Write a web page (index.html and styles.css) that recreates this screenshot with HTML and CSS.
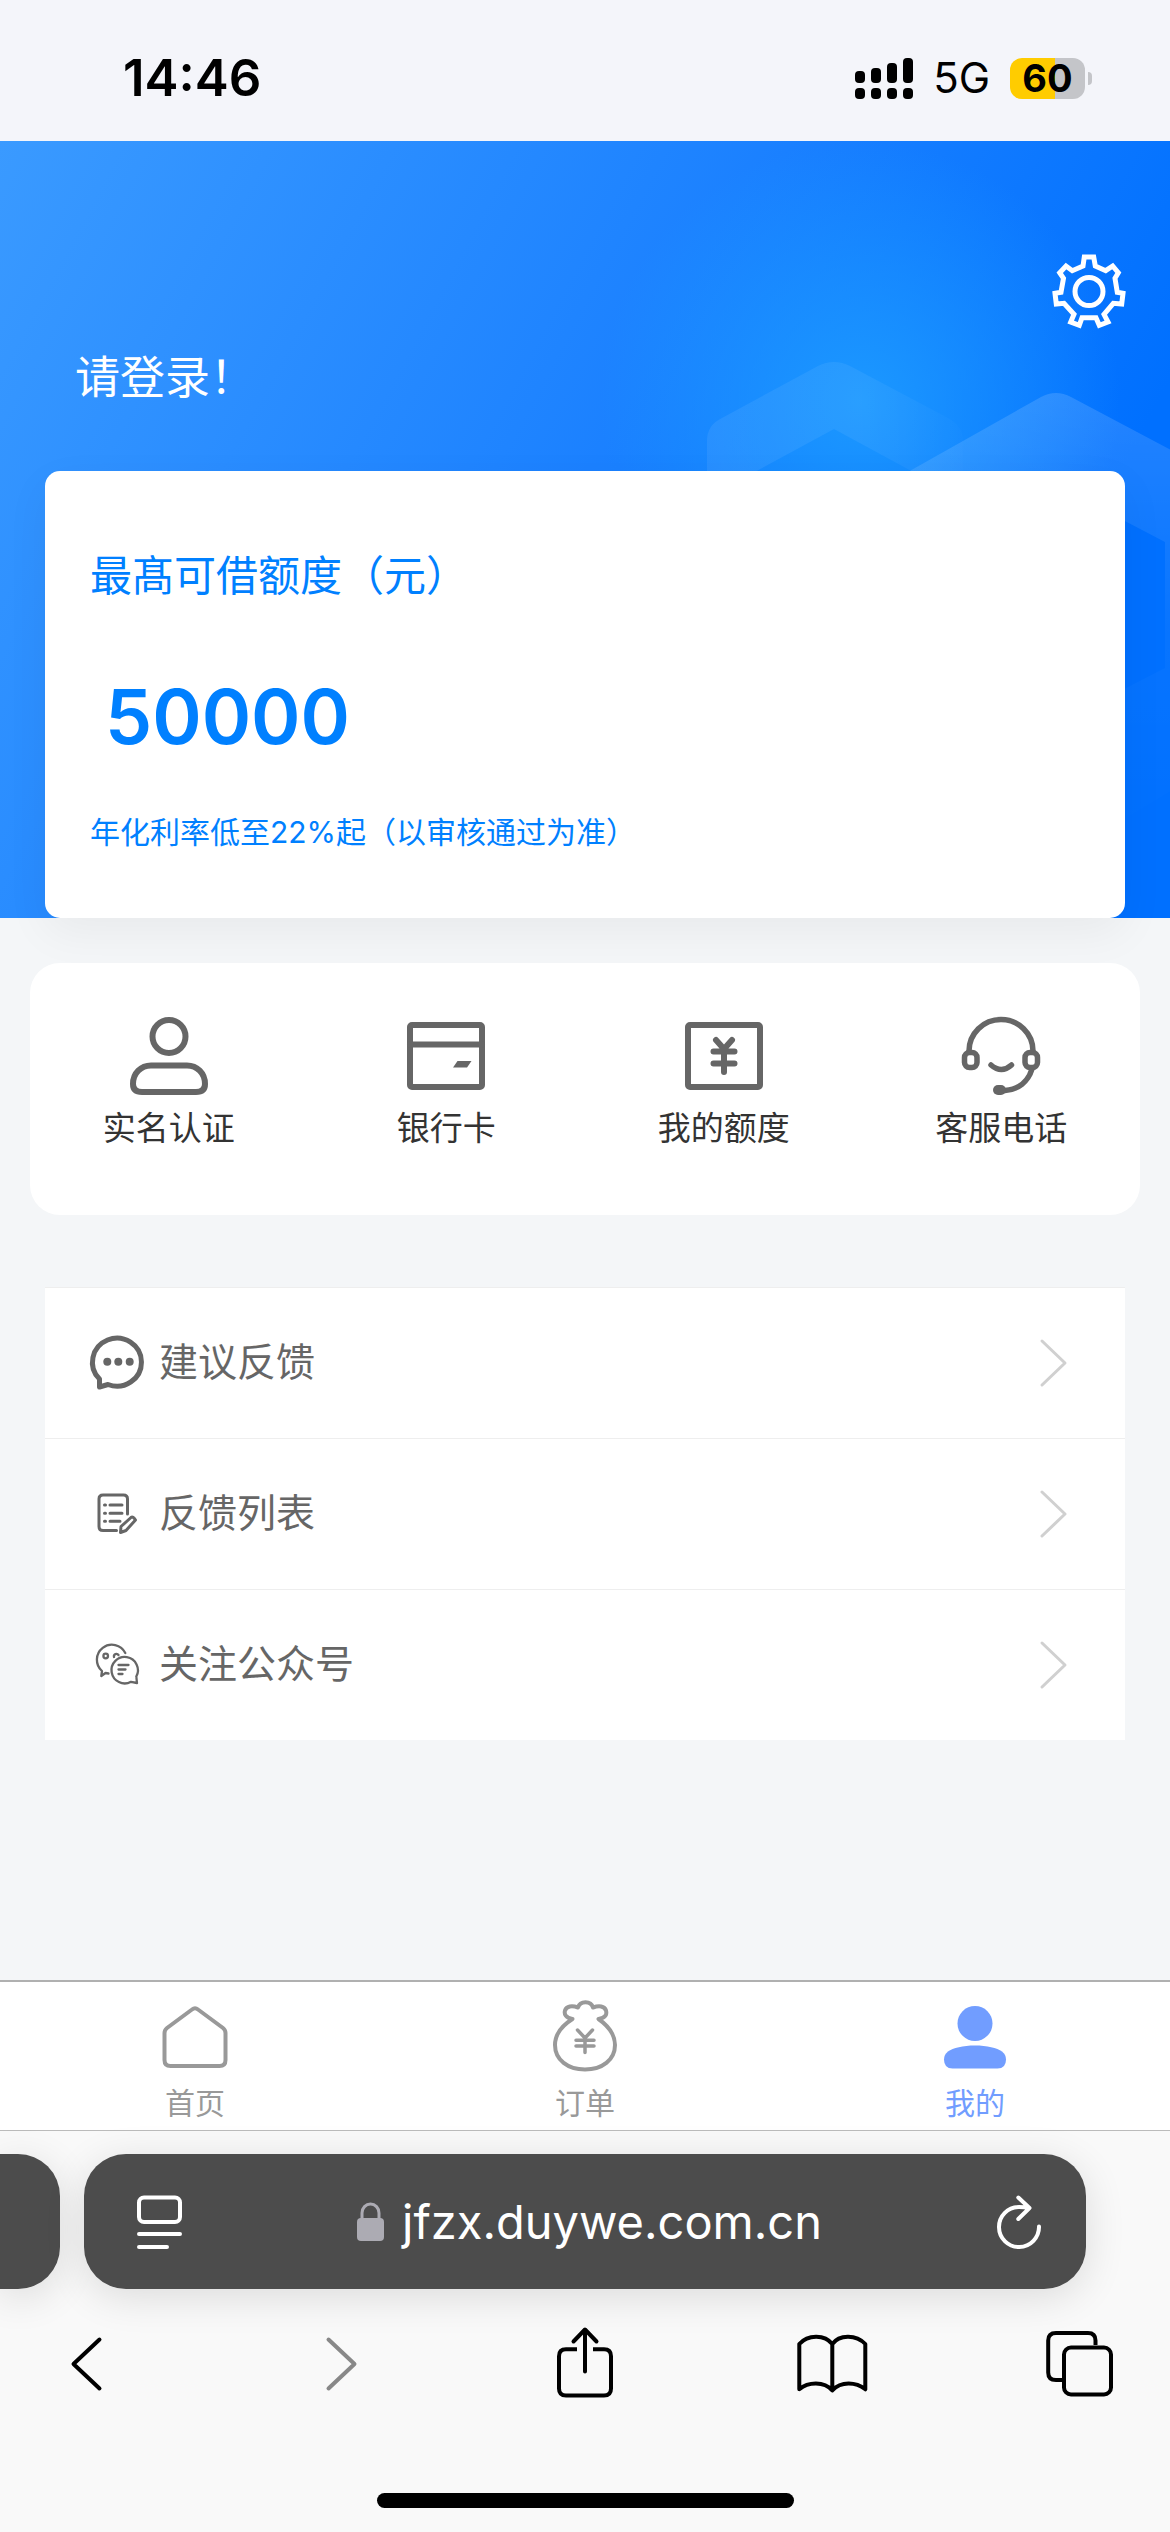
FILE: index.html
```html
<!DOCTYPE html>
<html lang="zh-CN">
<head>
<meta charset="utf-8">
<meta name="viewport" content="width=device-width, initial-scale=1">
<title>我的</title>
<link rel="stylesheet" href="styles.css">
</head>
<body>
<div class="status-bar">
  <time class="clock">14:46</time>
  <div class="status-right">
    <svg class="signal" viewBox="0 0 58 41" aria-hidden="true">
      <rect x="0" y="13" width="10" height="12" rx="4"/><rect x="16" y="10" width="10" height="15" rx="4"/>
      <rect x="32" y="5" width="10" height="20" rx="4"/><rect x="48" y="0" width="10" height="25" rx="4"/>
      <rect x="0" y="30" width="10" height="11" rx="4"/><rect x="16" y="30" width="10" height="11" rx="4"/>
      <rect x="32" y="30" width="10" height="11" rx="4"/><rect x="48" y="30" width="10" height="11" rx="4"/>
    </svg>
    <span class="network">5G</span>
    <div class="battery-wrap">
      <span class="battery">60</span>
      <span class="battery-nub"></span>
    </div>
  </div>
</div>

<main class="page">
  <header class="hero">
    <svg class="hero-art" viewBox="0 0 1170 777" preserveAspectRatio="xMaxYMin slice" aria-hidden="true">
      <defs>
        <linearGradient id="hexA" x1="0" y1="0" x2="1" y2="0">
          <stop offset="0" stop-color="#fff" stop-opacity=".07"/><stop offset=".6" stop-color="#fff" stop-opacity=".06"/><stop offset="1" stop-color="#fff" stop-opacity=".01"/>
        </linearGradient>
        <linearGradient id="hexB" x1="0" y1="0" x2="0" y2="1">
          <stop offset="0" stop-color="#fff" stop-opacity=".14"/><stop offset=".5" stop-color="#fff" stop-opacity=".03"/><stop offset="1" stop-color="#fff" stop-opacity="0"/>
        </linearGradient>
      </defs>
      <path fill="url(#hexA)" fill-rule="evenodd" d="M707 416V300Q707 284 722 277L818 225Q834 217 850 225L948 277Q963 285 963 300V416ZM834 288L740 339V416H928V339Z"/>
      <path fill="url(#hexB)" fill-rule="evenodd" d="M860 680V358L1041 256Q1056 248 1071 256L1252 352V600L1056 720ZM1056 344L947 401V527L1056 583L1165 527V401Z"/>
    </svg>
    <div class="hero-top">
      <button class="icon-button" aria-label="设置">
        <svg class="gear" viewBox="0 0 72 72">
          <path d="M31.3 2H40.7L42.3 11L52.7 15.7L59.7 11L65.3 17.7L62 23.3L64.3 37.3L70 38.3L68.7 49L60.3 48.3L51 59.3L55 67L46.3 70.3L43 62.7H29L26.3 70.3L17.7 67L21 59.3L11 48.3L3.3 49L2 38.3L8 37.3L10.5 23.3L6.7 17.7L13 11L19.3 15.7L30 11Z"/>
          <circle cx="36" cy="36.5" r="14"/>
        </svg>
      </button>
    </div>
    <a class="greeting" href="#login">请登录！</a>
    <section class="quota-card">
      <h1 class="quota-title">最髙可借额度（元）</h1>
      <p class="quota-amount">50000</p>
      <p class="quota-note">年化利率低至22%起（以审核通过为准）</p>
    </section>
  </header>

  <nav class="shortcuts" aria-label="快捷入口">
    <a class="shortcut" href="#verify">
      <svg class="shortcut-icon" viewBox="0 0 78 78" stroke-width="6">
        <circle cx="39" cy="19.5" r="16.5"/>
        <path d="M12 75Q3 75 3 67C3 56 11 48.5 21 48.5H57C67 48.5 75 56 75 67Q75 75 66 75Z"/>
      </svg>
      <span>实名认证</span>
    </a>
    <a class="shortcut" href="#bank">
      <svg class="shortcut-icon" viewBox="0 0 78 78" stroke-width="6">
        <rect x="3" y="8" width="72" height="62" rx="2"/><path d="M3 27.5H75"/>
        <path class="solid" d="M46 50.5L50.5 44H64.500L60 50.500Z"/>
      </svg>
      <span>银行卡</span>
    </a>
    <a class="shortcut" href="#quota">
      <svg class="shortcut-icon" viewBox="0 0 78 78" stroke-width="6">
        <rect x="3" y="8" width="72" height="62" rx="2"/>
        <path d="M31 23L39 32L47 23M39 32V55M28.500 34.500H49.500M28.500 46.500H49.500"/>
      </svg>
      <span>我的额度</span>
    </a>
    <a class="shortcut" href="#service">
      <svg class="shortcut-icon" viewBox="0 0 78 78" stroke-width="5.500">
        <path d="M7 34A32 31.500 0 0 1 71 34M70 52C66 65 56 72.500 43 73.500M29 48Q39.500 57 49.500 48"/>
        <rect x="2.500" y="35.500" width="12.500" height="15" rx="5"/><rect x="63" y="35.500" width="12.500" height="15" rx="5"/>
        <rect class="solid" x="31" y="68" width="13" height="10" rx="5"/>
      </svg>
      <span>客服电话</span>
    </a>
  </nav>

  <ul class="menu">
    <li><a class="menu-item" href="#feedback">
      <svg class="menu-icon" viewBox="0 0 54 54" stroke-width="5">
        <path d="M9.500 43A24.500 24 0 1 1 18 48.500L9.500 51Z"/>
        <g class="solid"><circle cx="17.300" cy="25.700" r="4"/><circle cx="28.300" cy="25.700" r="4"/><circle cx="39.700" cy="25.700" r="4"/></g>
      </svg>
      <span class="menu-label">建议反馈</span>
      <svg class="chevron" viewBox="0 0 27 48"><path d="M2 2L25 24L2 46"/></svg>
    </a></li>
    <li><a class="menu-item" href="#feedback-list">
      <svg class="menu-icon" viewBox="0 0 54 54" stroke-width="3">
        <path d="M26.500 43.500H13Q9 43.500 9 39.500V12Q9 8 13 8H33.500Q37.500 8 37.500 12V27M20 18H32M20 26.300H32M20 34.300H30M14.500 18H15.500M14.500 26.300H15.500M14.500 34.300H15.500"/>
        <path d="M30.500 45.500L31 39.500L41 30.500Q43 29 45.500 33L36 43.500Z"/>
      </svg>
      <span class="menu-label">反馈列表</span>
      <svg class="chevron" viewBox="0 0 27 48"><path d="M2 2L25 24L2 46"/></svg>
    </a></li>
    <li><a class="menu-item" href="#follow">
      <svg class="menu-icon" viewBox="0 0 54 54" stroke-width="2.300">
        <path d="M35.300 15A15 15 0 1 0 12 33L11.300 38L15.500 35L18.500 35.500M24 19A2.500 2.500 0 0 1 28.500 17"/>
        <circle cx="15.700" cy="18" r="2.300"/>
        <path d="M46.300 38.500A13.200 13.200 0 1 0 41 43.800L47 45L46.300 38.500M28.500 27H38.500M28.500 31.500H35.500M28.500 36H32.500"/>
      </svg>
      <span class="menu-label">关注公众号</span>
      <svg class="chevron" viewBox="0 0 27 48"><path d="M2 2L25 24L2 46"/></svg>
    </a></li>
  </ul>
</main>

<nav class="tab-bar" aria-label="主导航">
  <a class="tab" href="#home">
    <svg class="tab-icon" viewBox="0 0 72 72"><path d="M33 9.500Q36 7 39 9.500L64 28Q66.500 30 66.500 33V60Q66.500 66 60.500 66H11.500Q5.500 66 5.500 60V33Q5.500 30 8 28Z"/></svg>
    <span>首页</span>
  </a>
  <a class="tab" href="#orders">
    <svg class="tab-icon" viewBox="0 0 72 72">
      <path d="M23.500 19C14 25 6 33 6 45C6 60 19 69.500 36 69.500S66 60 66 45C66 33 58 25 49.500 19C57 18 58 14 57 10.500C55.500 6 50 5.500 44 7.500C42 .5 31 .5 29 7.500C23 5.500 17.500 6 16 10.500C15 14 16.500 18 23.500 19Z"/>
      <path d="M28.500 30L36 38L43.500 30M36 38V52.500M27 40.300H45M27 46H45" stroke-width="3.500"/>
    </svg>
    <span>订单</span>
  </a>
  <a class="tab tab-active" href="#mine" aria-current="page">
    <svg class="tab-icon" viewBox="0 0 72 72"><circle cx="36" cy="23.500" r="17.500"/><path d="M36 45.500C48 45.500 58 48 63 51.500Q67 54.500 67 59.500Q67 68.500 58.500 68.500H13.500Q5 68.500 5 59.500Q5 54.500 9 51.500C14 48 24 45.500 36 45.500Z"/></svg>
    <span>我的</span>
  </a>
</nav>

<footer class="browser">
  <div class="address-row">
    <div class="address-previous"></div>
    <div class="address">
      <button class="icon-button" aria-label="页面菜单">
        <svg class="address-icon" viewBox="0 0 45 54"><rect x="2" y="2.500" width="41" height="24.500" rx="5"/><path d="M2 39H43M2 52H30"/></svg>
      </button>
      <button class="address-url">
        <svg class="lock" viewBox="0 0 27 39" aria-hidden="true"><rect x="0" y="16" width="27" height="23" rx="4"/><path d="M5 18V11A8.500 9 0 0 1 22 11V18"/></svg>
        <span>jfzx.duywe.com.cn</span>
      </button>
      <button class="icon-button" aria-label="刷新">
        <svg class="address-icon" viewBox="0 0 45 54"><path d="M42 31.500A20 20 0 1 1 22 12Q27 12 32 13M21.300 2.500L32.500 13L21.300 24"/></svg>
      </button>
    </div>
  </div>
  <div class="toolbar">
    <button class="icon-button" aria-label="后退"><svg class="tool-icon" viewBox="0 0 72 72"><path d="M48.500 12.500L22.500 37L48.500 61.500"/></svg></button>
    <button class="icon-button tool-disabled" aria-label="前进"><svg class="tool-icon" viewBox="0 0 72 72"><path d="M28.500 12.500L54.500 37L28.500 61.500"/></svg></button>
    <button class="icon-button" aria-label="分享"><svg class="tool-icon" viewBox="0 0 72 72"><path d="M28 22.300H17Q10 22.300 10 29.300V61.500Q10 68.500 17 68.500H55Q62 68.500 62 61.500V29.300Q62 22.300 55 22.300H44" stroke-linecap="butt"/><path d="M36 3V44.500M24.500 14.500L36 2.500L47.500 14.500"/></svg></button>
    <button class="icon-button" aria-label="书签"><svg class="tool-icon" viewBox="0 0 72 72"><path d="M34.300 17C27 7.500 10 7 1.300 17V62.300C10 55 26 54 34.300 63.500C43 54 58 55 67.300 62.300V17C58 7 41 7.500 34.300 17V63"/></svg></button>
    <button class="icon-button" aria-label="标签页"><svg class="tool-icon" viewBox="0 0 72 72"><rect x="17" y="20.500" width="47" height="47" rx="7"/><path d="M15 53H9Q1.200 53 1.200 45.500V13.500Q1.200 6 9 6H41Q48.500 6 48.500 13.500V18" stroke-linecap="butt"/></svg></button>
  </div>
  <div class="home-indicator"></div>
</footer>
</body>
</html>
```
FILE: styles.css
```css
* {
  box-sizing: border-box;
}

body {
  margin: 0;
  min-height: 100vh;
  display: flex;
  flex-direction: column;
  background: #f4f6f8;
  color: #333;
  font-family: Inter, "Noto Sans CJK SC", sans-serif;
  font-size: 30px;
}

h1,
p,
ul {
  margin: 0;
  padding: 0;
}

ul {
  list-style: none;
}

a {
  color: inherit;
  text-decoration: none;
}

button {
  margin: 0;
  padding: 0;
  border: 0;
  background: none;
  color: inherit;
  font: inherit;
}

svg {
  display: block;
  fill: none;
  stroke: currentColor;
  stroke-linecap: round;
  stroke-linejoin: round;
  overflow: visible;
}

.solid {
  fill: currentColor;
  stroke: none;
}

/* Status bar */
.status-bar {
  display: flex;
  align-items: center;
  justify-content: space-between;
  padding: 48px 78px 33px 123px;
  background: #f4f5fa;
  color: #000;
  line-height: 60px;
}

.clock {
  font-size: 51px;
  font-weight: 600;
}

.status-right {
  display: flex;
  align-items: center;
  gap: 20px;
}

.signal {
  width: 58px;
  height: 41px;
  fill: #000;
  stroke: none;
}

.network {
  font-size: 42px;
}

.battery-wrap {
  display: flex;
  align-items: center;
  gap: 3px;
}

.battery {
  width: 75px;
  border-radius: 12px;
  background: linear-gradient(to right, #fc0 60%, #c4c5c9 60%);
  font-size: 38px;
  font-weight: 700;
  line-height: 41px;
  text-align: center;
}

.battery-nub {
  width: 4px;
  height: 13px;
  border-radius: 0 4px 4px 0;
  background: #c4c5c9;
}

/* Blue header */
.page {
  flex: 1;
}

.hero {
  position: relative;
  display: flex;
  flex-direction: column;
  padding: 114px 45px 0;
  background:
    radial-gradient(circle at 860px 260px, rgba(28, 154, 255, .95), rgba(28, 154, 255, 0) 260px),
    linear-gradient(118deg, #3a9aff 0%, #1a80ff 50%, #0070ff 82%, #0070ff 100%);
  color: #fff;
}

.hero-art {
  position: absolute;
  inset: 0;
  width: 100%;
  height: 100%;
  overflow: hidden;
  stroke: none;
}

.hero-top {
  position: relative;
  display: flex;
  justify-content: flex-end;
}

.gear {
  width: 72px;
  height: 72px;
  stroke-width: 5;
  stroke-linejoin: miter;
}

.greeting {
  position: relative;
  align-self: flex-start;
  margin: 21px 0 63px;
  padding-left: 30px;
  font-size: 45px;
  line-height: 60px;
}

.quota-card {
  position: relative;
  padding: 75px 45px 63px;
  border-radius: 15px;
  background: #fff;
  box-shadow: 0 15px 45px rgba(0, 0, 0, .05);
  color: #0080ff;
}

.quota-title {
  font-size: 42px;
  font-weight: 400;
  line-height: 60px;
}

.quota-amount {
  margin: 53px 0 35px;
  padding-left: 15px;
  font-size: 75px;
  font-weight: 600;
  line-height: 116px;
}

.quota-note {
  line-height: 45px;
}

/* Shortcut card */
.shortcuts {
  position: relative;
  display: grid;
  grid-template-columns: repeat(4, 1fr);
  margin: 45px 30px 72px;
  padding: 54px 0 63px;
  border-radius: 30px;
  background: #fff;
}

.shortcut {
  display: flex;
  flex-direction: column;
  align-items: center;
  gap: 9px;
  font-size: 33px;
  line-height: 48px;
}

.shortcut-icon {
  width: 78px;
  height: 78px;
  color: #666;
}

/* Menu list */
.menu {
  margin: 0 45px 45px;
  background: #fff;
  color: #666;
}

.menu-item {
  display: flex;
  align-items: center;
  gap: 15px;
  min-height: 151px;
  padding: 0 58px 0 45px;
  border-top: 1px solid #eee;
}

.menu-icon {
  width: 54px;
  height: 54px;
}

.menu-label {
  flex: 1;
  padding-bottom: 3px;
  font-size: 39px;
  line-height: 54px;
}

.chevron {
  width: 27px;
  height: 48px;
  color: #d0d0d0;
  stroke-width: 3;
}

/* App tab bar */
.tab-bar {
  display: grid;
  grid-template-columns: repeat(3, 1fr);
  padding: 18px 0 4px;
  border-top: 2px solid #b0b0b0;
  background: #fff;
  color: #999;
}

.tab {
  display: flex;
  flex-direction: column;
  align-items: center;
  gap: 8px;
  line-height: 46px;
}

.tab-icon {
  width: 72px;
  height: 72px;
  stroke-width: 4;
}

.tab-active {
  color: #719dff;
}

.tab-active .tab-icon {
  fill: currentColor;
  stroke: none;
}

/* Browser controls */
.browser {
  border-top: 1px solid #bbb;
  padding: 23px 0 24px;
  background: #f9f9f9;
  color: #000;
}

.address-row {
  display: flex;
  gap: 24px;
  padding-right: 84px;
}

.address-previous,
.address {
  background: #4c4c4c;
  box-shadow: 0 8px 40px rgba(0, 0, 0, .12);
}

.address-previous {
  width: 60px;
  border-radius: 0 42px 42px 0;
}

.address {
  flex: 1;
  display: flex;
  align-items: center;
  min-height: 135px;
  padding: 0 44px 0 53px;
  border-radius: 42px;
  color: #fff;
}

.address-icon {
  width: 45px;
  height: 54px;
  stroke-width: 4;
}

.address-url {
  flex: 1;
  display: flex;
  align-items: center;
  justify-content: center;
  gap: 18px;
  font-size: 47px;
  line-height: 60px;
}

.lock {
  width: 27px;
  height: 39px;
  color: #acabb3;
  stroke-width: 3;
}

.lock rect {
  fill: currentColor;
  stroke: none;
}

.toolbar {
  display: flex;
  justify-content: space-between;
  padding: 38px 51px 94px;
}

.tool-icon {
  width: 72px;
  height: 72px;
  stroke-width: 4;
}

.tool-disabled {
  color: #888;
}

.home-indicator {
  width: 417px;
  height: 15px;
  margin: 0 auto;
  border-radius: 8px;
  background: #000;
}
```
